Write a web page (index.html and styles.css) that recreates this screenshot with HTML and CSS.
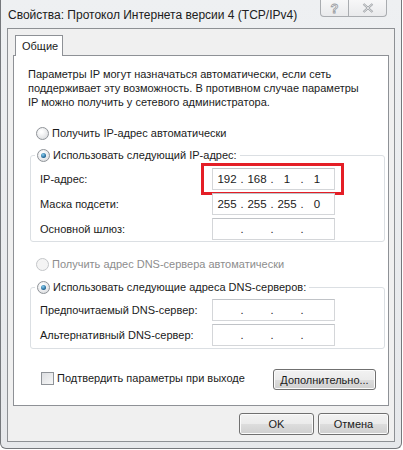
FILE: index.html
```html
<!DOCTYPE html>
<html lang="ru">
<head>
    <meta charset="UTF-8">
    <meta name="viewport" content="width=device-width, initial-scale=1.0">
    <title>Свойства: Протокол Интернета версии 4 (TCP/IPv4)</title>
    <link rel="stylesheet" href="styles.css">
</head>
<body>
    <div class="window">
        <div class="titlebar">
            <span class="title">Свойства: Протокол Интернета версии 4 (TCP/IPv4)</span>
            <div class="caption-btns">
                <span class="cap-btn help">?</span>
                <span class="cap-btn close">
                    <svg width="12" height="10" viewBox="0 0 12 10">
                        <path d="M1.5 1 L10.5 9 M10.5 1 L1.5 9" stroke="#9a9ea3" stroke-width="2.2" fill="none"/>
                        <path d="M1.5 1 L10.5 9 M10.5 1 L1.5 9" stroke="#f4f4f4" stroke-width="0.8" fill="none"/>
                    </svg>
                </span>
            </div>
        </div>

        <div class="client">
            <div class="tabs">
                <span class="tab">Общие</span>
            </div>
            <div class="panel">
                <p class="intro">Параметры IP могут назначаться автоматически, если сеть поддерживает эту возможность. В противном случае параметры IP можно получить у сетевого администратора.</p>

                <label class="radio-row first">
                    <span class="radio"></span>
                    Получить IP-адрес автоматически
                </label>

                <fieldset class="group">
                    <legend><label class="radio-row"><span class="radio checked"></span>Использовать следующий IP-адрес:</label></legend>
                    <div class="field">
                        <span>IP-адрес:</span>
                        <span class="highlight">
                            <span class="ip-box">
                                <span class="oct">192</span><span class="dot">.</span><span class="oct">168</span><span class="dot">.</span><span class="oct">1</span><span class="dot">.</span><span class="oct">1</span>
                            </span>
                        </span>
                    </div>
                    <div class="field">
                        <span>Маска подсети:</span>
                        <span class="ip-box">
                            <span class="oct">255</span><span class="dot">.</span><span class="oct">255</span><span class="dot">.</span><span class="oct">255</span><span class="dot">.</span><span class="oct">0</span>
                        </span>
                    </div>
                    <div class="field">
                        <span>Основной шлюз:</span>
                        <span class="ip-box">
                            <span class="oct"></span><span class="dot">.</span><span class="oct"></span><span class="dot">.</span><span class="oct"></span><span class="dot">.</span><span class="oct"></span>
                        </span>
                    </div>
                </fieldset>

                <label class="radio-row dns-auto disabled">
                    <span class="radio"></span>
                    Получить адрес DNS-сервера автоматически
                </label>

                <fieldset class="group dns">
                    <legend><label class="radio-row"><span class="radio checked"></span>Использовать следующие адреса DNS-серверов:</label></legend>
                    <div class="field">
                        <span>Предпочитаемый DNS-сервер:</span>
                        <span class="ip-box">
                            <span class="oct"></span><span class="dot">.</span><span class="oct"></span><span class="dot">.</span><span class="oct"></span><span class="dot">.</span><span class="oct"></span>
                        </span>
                    </div>
                    <div class="field">
                        <span>Альтернативный DNS-сервер:</span>
                        <span class="ip-box">
                            <span class="oct"></span><span class="dot">.</span><span class="oct"></span><span class="dot">.</span><span class="oct"></span><span class="dot">.</span><span class="oct"></span>
                        </span>
                    </div>
                </fieldset>

                <div class="bottom-row">
                    <label class="check-row">
                        <span class="checkbox"></span>
                        Подтвердить параметры при выходе
                    </label>
                    <button class="btn advanced">Дополнительно...</button>
                </div>
            </div>

            <div class="footer">
                <button class="btn ok">OK</button>
                <button class="btn cancel">Отмена</button>
            </div>
        </div>
    </div>
</body>
</html>
```

FILE: styles.css
```css
body {
    margin: 0;
    background: #ffffff;
    font-family: "Liberation Sans", Arial, sans-serif;
    font-size: 11px;
    color: #1b1b1b;
}
.window {
    width: 388px;
    height: 442px;
    padding: 0 6px 6px 6px;
    border: 1px solid #75787c;
    border-top: none;
    border-radius: 0 0 6px 6px;
    background: linear-gradient(#eef0f2, #e6e8eb);
}
.titlebar {
    height: 28px;
    display: flex;
    justify-content: space-between;
    align-items: flex-start;
}
.title {
    font-size: 12px;
    margin-top: 8px;
    margin-left: 1px;
    color: #202020;
}
.caption-btns {
    display: flex;
    margin-right: 8px;
}
.cap-btn {
    height: 16px;
    display: flex;
    align-items: center;
    justify-content: center;
    border: 1px solid #a9acb0;
    border-top: none;
    background: linear-gradient(#f7f7f8, #e9eaec);
}
.help {
    width: 27px;
    border-radius: 0 0 0 4px;
    font-weight: bold;
    font-size: 13px;
    color: #f4f4f4;
    -webkit-text-stroke: 0.8px #9a9ea3;
}
.close {
    width: 37px;
    border-left: none;
    border-radius: 0 0 4px 0;
}
.client {
    height: 406px;
    border: 1px solid #8d9094;
    background: #f0f0f0;
    padding: 6px 5px 0 5px;
}
.tabs {
    display: flex;
    padding-left: 2px;
}
.tab {
    width: 34px;
    height: 20px;
    padding: 0 6px;
    line-height: 20px;
    border: 1px solid #8e9196;
    border-bottom: none;
    background: #ffffff;
    font-size: 11px;
    margin-bottom: -1px;
    position: relative;
}
.panel {
    height: 338px;
    border: 1px solid #8e9196;
    background: #ffffff;
    padding: 11px 11px 0 14px;
}
.intro {
    margin: 0;
    line-height: 14px;
    width: 340px;
}
.radio-row {
    display: flex;
    align-items: center;
    height: 16px;
    gap: 3px;
}
.radio-row.first {
    margin-top: 16px;
    margin-left: 8px;
}
.radio {
    width: 11px;
    height: 11px;
    border-radius: 50%;
    border: 1px solid #8f9398;
    background: radial-gradient(circle at 40% 35%, #ffffff 10%, #d8dadd 90%);
    display: inline-flex;
    align-items: center;
    justify-content: center;
}
.radio.checked::after {
    content: "";
    width: 5px;
    height: 5px;
    border-radius: 50%;
    background: radial-gradient(circle at 40% 35%, #8ad0f2, #1b5f8f 70%);
}
.disabled {
    color: #8d8d8d;
}
.disabled .radio {
    border-color: #c4c6c9;
    background: #f4f4f4;
}
.group {
    margin: 6px 0 0 2px;
    width: 344px;
    padding: 5px 0 1px 9px;
    border: 1px solid #dbdfe3;
    border-radius: 3px;
}
.group legend {
    padding: 0 3px 0 2px;
    margin-left: -5px;
}
.field {
    display: grid;
    grid-template-columns: 172px 121px;
    align-items: center;
    height: 22px;
    margin-bottom: 3px;
}
.field:last-child {
    margin-bottom: 0;
}
.ip-box {
    width: 117px;
    height: 20px;
    border: 1px solid #d4d6d9;
    border-top-color: #c0c3c7;
    display: flex;
    align-items: center;
    padding: 0 2px;
    background: #ffffff;
}
.oct {
    width: 24px;
    text-align: center;
    font-size: 11.5px;
}
.dot {
    width: 6px;
    text-align: center;
}
.highlight {
    margin: -5px -11px;
    padding: 2px 8px;
    border: 3px solid #e41e26;
    width: 121px;
}
.dns-auto {
    margin-top: 14px;
    margin-left: 8px;
}
.group.dns {
    margin-top: 7px;
    padding-top: 4px;
    padding-bottom: 2px;
}
.bottom-row {
    display: flex;
    align-items: center;
    justify-content: space-between;
    margin-top: 20px;
    padding-left: 13px;
    padding-right: 1px;
}
.check-row {
    display: flex;
    align-items: center;
    gap: 3px;
    margin-top: -3px;
}
.checkbox {
    width: 11px;
    height: 11px;
    border: 1px solid #8f9398;
    background: linear-gradient(135deg, #dcdee1, #f7f7f7);
}
.btn {
    font-family: "Liberation Sans", Arial, sans-serif;
    font-size: 11px;
    color: #1b1b1b;
    height: 21px;
    border: 1px solid #707070;
    border-radius: 3px;
    background: linear-gradient(#f2f2f2 0%, #ebebeb 50%, #dddddd 51%, #cfcfcf 100%);
    box-shadow: inset 0 0 0 1px #fbfbfb;
    padding: 0;
}
.advanced {
    width: 103px;
}
.footer {
    display: flex;
    justify-content: flex-end;
    gap: 4px;
    margin-top: 7px;
    padding-right: 0;
}
.ok {
    width: 75px;
    height: 22px;
}
.cancel {
    width: 71px;
    height: 22px;
}
```
